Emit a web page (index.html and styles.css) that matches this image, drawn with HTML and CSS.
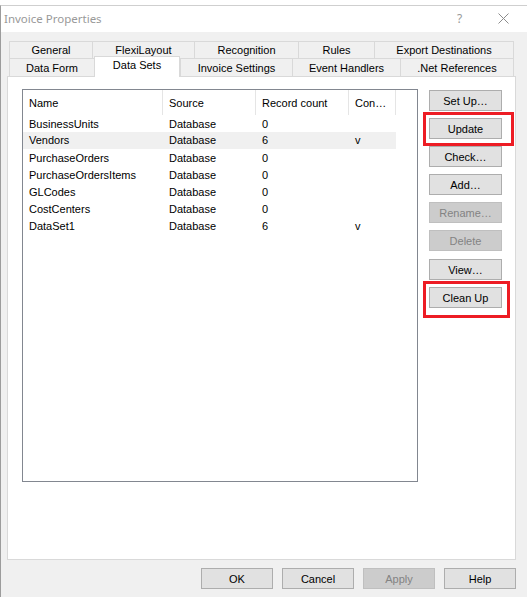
FILE: index.html
```html
<!DOCTYPE html>
<html>
<head>
<meta charset="utf-8">
<title>Invoice Properties</title>
<link rel="stylesheet" href="styles.css">
</head>
<body>
<div class="window">
  <div class="titlebar">
    <span class="title">Invoice Properties</span>
    <span class="help">?</span>
    <span class="close">
      <svg width="11" height="11" viewBox="0 0 11 11"><path d="M0.5 0.5 L10.5 10.5 M10.5 0.5 L0.5 10.5" stroke="#8c8c8c" stroke-width="1" fill="none"/></svg>
    </span>
  </div>
  <div class="client">
    <div class="tabs">
      <div class="tabrow back">
        <div class="tab w-general">General</div>
        <div class="tab w-flexi">FlexiLayout</div>
        <div class="tab w-recog">Recognition</div>
        <div class="tab w-rules">Rules</div>
        <div class="tab w-export last">Export Destinations</div>
      </div>
      <div class="tabrow front">
        <div class="tab w-dataform">Data Form</div>
        <div class="tab w-datasets selected">Data Sets</div>
        <div class="tab w-invoice">Invoice Settings</div>
        <div class="tab w-events">Event Handlers</div>
        <div class="tab w-net last">.Net References</div>
      </div>
    </div>
    <div class="panel">
      <div class="list">
        <div class="row header">
          <div class="cell c-name">Name</div>
          <div class="cell c-source">Source</div>
          <div class="cell c-count">Record count</div>
          <div class="cell c-con">Con…</div>
        </div>
        <div class="row"><div class="cell c-name">BusinessUnits</div><div class="cell c-source">Database</div><div class="cell c-count">0</div><div class="cell c-con"></div></div>
        <div class="row sel"><div class="cell c-name">Vendors</div><div class="cell c-source">Database</div><div class="cell c-count">6</div><div class="cell c-con">v</div></div>
        <div class="row"><div class="cell c-name">PurchaseOrders</div><div class="cell c-source">Database</div><div class="cell c-count">0</div><div class="cell c-con"></div></div>
        <div class="row"><div class="cell c-name">PurchaseOrdersItems</div><div class="cell c-source">Database</div><div class="cell c-count">0</div><div class="cell c-con"></div></div>
        <div class="row"><div class="cell c-name">GLCodes</div><div class="cell c-source">Database</div><div class="cell c-count">0</div><div class="cell c-con"></div></div>
        <div class="row"><div class="cell c-name">CostCenters</div><div class="cell c-source">Database</div><div class="cell c-count">0</div><div class="cell c-con"></div></div>
        <div class="row"><div class="cell c-name">DataSet1</div><div class="cell c-source">Database</div><div class="cell c-count">6</div><div class="cell c-con">v</div></div>
      </div>
      <div class="side">
        <button class="btn">Set Up…</button>
        <div class="marked"><button class="btn">Update</button><span class="mark mark-update"></span></div>
        <button class="btn">Check…</button>
        <button class="btn">Add…</button>
        <button class="btn" disabled>Rename…</button>
        <button class="btn" disabled>Delete</button>
        <button class="btn gap">View…</button>
        <div class="marked"><button class="btn">Clean Up</button><span class="mark mark-clean"></span></div>
      </div>
    </div>
    <div class="footer">
      <button class="btn fbtn">OK</button>
      <button class="btn fbtn">Cancel</button>
      <button class="btn fbtn" disabled>Apply</button>
      <button class="btn fbtn">Help</button>
    </div>
  </div>
</div>
</body>
</html>
```

FILE: styles.css
```css
* { box-sizing: border-box; }
html, body {
  margin: 0;
  padding: 0;
  background: #ffffff;
  width: 527px;
  height: 597px;
  overflow: hidden;
}
body {
  font-family: "Liberation Sans", Arial, sans-serif;
  font-size: 11px;
  color: #000;
}
.window {
  margin-top: 5px;
  border-top: 1px solid #cfcfcf;
  border-left: 1px solid #9c9c9c;
  height: 592px;
}
.titlebar {
  height: 26px;
  background: #fff;
  display: flex;
  align-items: center;
  padding-left: 3px;
  color: #999999;
}
.title {
  font-family: "Noto Sans", "Open Sans", sans-serif;
  font-size: 11.5px;
  flex: 1;
  padding-bottom: 2px;
}
.help {
  font-family: "Noto Sans", sans-serif;
  font-size: 12px;
  color: #999;
  width: 41px;
  padding-bottom: 2px;
}
.close {
  width: 29px;
  display: flex;
  padding-bottom: 1px;
}
.client {
  background: #f0f0f0;
  height: 565px;
  padding-top: 9px;
}
.tabs {
  margin-left: 8px;
}
.tabrow {
  display: flex;
}
.tabrow.back { height: 17px; }
.tabrow.front { height: 18px; align-items: flex-end; }
.tab {
  height: 100%;
  border-top: 1px solid #d9d9d9;
  border-left: 1px solid #d9d9d9;
  background: #f0f0f0;
  display: flex;
  align-items: center;
  justify-content: center;
  white-space: nowrap;
}
.tab.last { border-right: 1px solid #d9d9d9; }
.tab.selected {
  height: 21px;
  margin-bottom: -1px;
  background: #fff;
  border-right: 1px solid #d9d9d9;
  position: relative;
  z-index: 1;
  padding-bottom: 4px;
}
.w-general { width: 83px; }
.w-flexi { width: 102px; }
.w-recog { width: 104px; }
.w-rules { width: 76px; }
.w-export { width: 140px; }
.w-dataform { width: 85px; }
.w-datasets { width: 86px; }
.w-invoice { width: 112px; }
.w-events { width: 108px; }
.w-net { width: 114px; }

.panel {
  margin-left: 6px;
  width: 509px;
  height: 484px;
  background: #fff;
  border: 1px solid #d9d9d9;
  display: flex;
  align-items: flex-start;
  padding: 12px 0 0 14px;
}
.list {
  width: 396px;
  height: 393px;
  border: 1px solid #828790;
  background: #fff;
}
.row {
  display: flex;
  height: 17px;
  align-items: center;
}
.row.header {
  height: 25px;
  align-items: stretch;
}
.row.header .cell {
  border-right: 1px solid #e5e5e5;
  display: flex;
  align-items: center;
}
.row.sel .cell { background: #f0f0f0; height: 17px; line-height: 17px; }
.cell {
  padding-left: 6px;
  white-space: nowrap;
  overflow: hidden;
}
.c-name { width: 140px; }
.c-source { width: 93px; }
.c-count { width: 93px; }
.c-con { width: 47px; }

.side {
  margin-left: 11px;
  display: flex;
  flex-direction: column;
  gap: 7px;
  padding-top: 1px;
}
.btn {
  font-family: "Liberation Sans", Arial, sans-serif;
  font-size: 11px;
  width: 73px;
  height: 21px;
  background: #e1e1e1;
  border: 1px solid #adadad;
  color: #000;
  padding: 0;
  margin: 0;
  display: block;
}
.btn:disabled {
  background: #cccccc;
  border-color: #bfbfbf;
  color: #838383;
}
.btn.gap { margin-top: 1px; }
.marked {
  position: relative;
}
.mark {
  position: absolute;
  border: 3px solid #ed1c24;
}
.mark-update {
  left: -6px;
  top: -6px;
  width: 91px;
  height: 34px;
}
.mark-clean {
  left: -6px;
  top: -6px;
  width: 87px;
  height: 37px;
}
.footer {
  display: flex;
  gap: 9px;
  margin-top: 8px;
  padding-left: 200px;
}
.fbtn { width: 72px; }
```
